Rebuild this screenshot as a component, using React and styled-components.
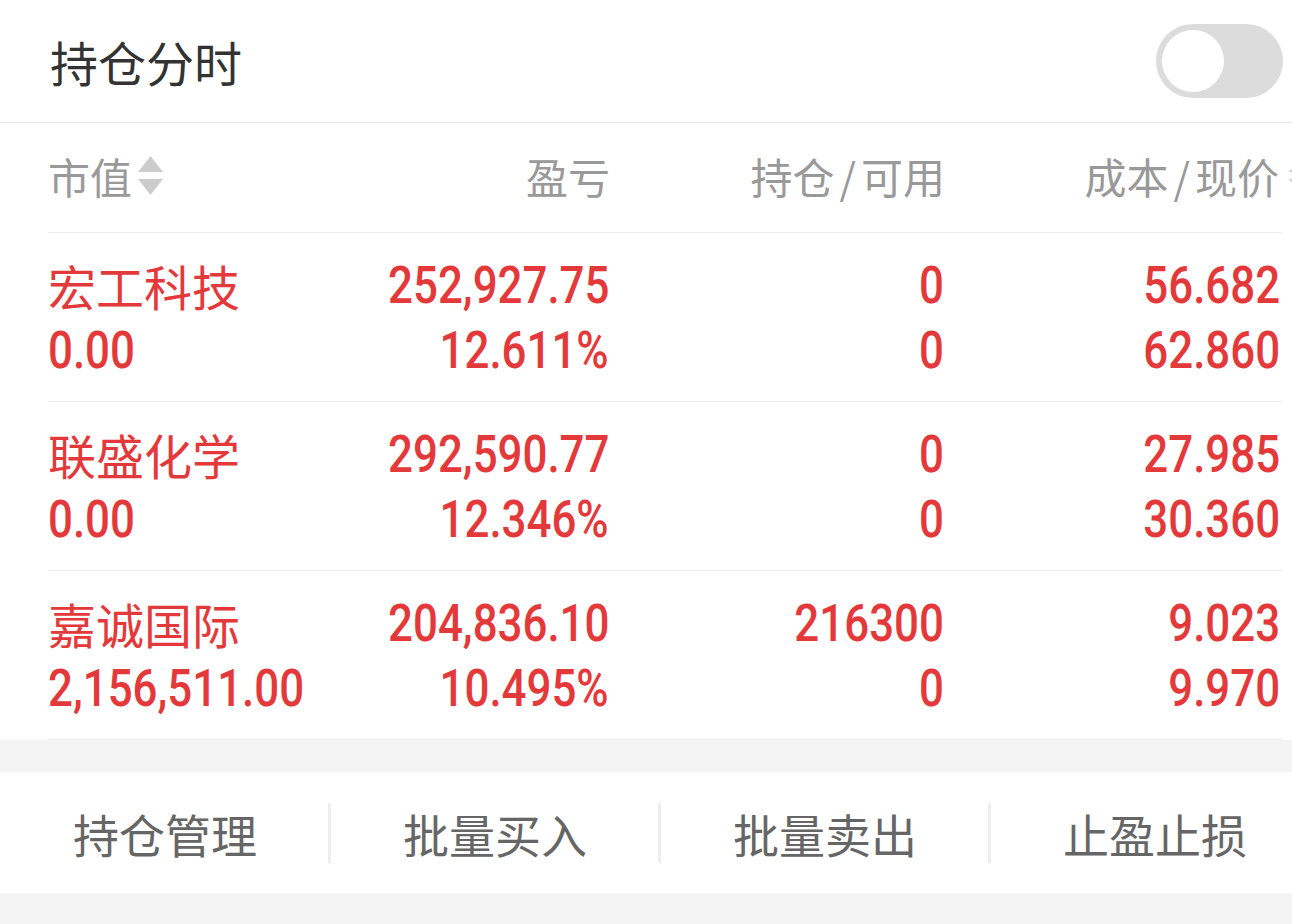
import React from "react";
import styled, { createGlobalStyle } from "styled-components";

const GlobalStyle = createGlobalStyle`
  html, body { margin: 0; padding: 0; }
  body {
    background: #f4f4f4;
    overflow: hidden;
    font-family: "Noto Sans CJK SC", "Noto Sans", sans-serif;
  }
`;

const Page = styled.div`
  width: 1292px;
  height: 924px;
  overflow: hidden;
  background: #f4f4f4;
`;

const TopBar = styled.div`
  height: 122px;
  background: #fff;
  border-bottom: 1px solid #e6e6e6;
  display: flex;
  align-items: center;
  justify-content: space-between;
  padding: 0 9px 0 50px;
`;

const Title = styled.div`
  font-size: 48px;
  color: #333;
  line-height: 1;
`;

const Toggle = styled.div`
  width: 127px;
  height: 74px;
  border-radius: 37px;
  background: #dcdcdc;
  padding: 6px;
  box-sizing: border-box;
  display: flex;
  align-items: center;
`;

const Knob = styled.div`
  width: 62px;
  height: 62px;
  border-radius: 50%;
  background: #fff;
`;

const TableWrap = styled.div`
  background: #fff;
  padding-left: 48px;
`;

const cols = "226px 335px 335px 336px";

const HeadRow = styled.div`
  width: 1234px;
  height: 110px;
  box-sizing: border-box;
  border-bottom: 1px solid #ececec;
  display: grid;
  grid-template-columns: ${cols};
  align-items: center;
`;

const HeadCell = styled.div`
  display: flex;
  align-items: center;
  justify-content: ${(p) => (p.$left ? "flex-start" : "flex-end")};
  margin-right: ${(p) => (p.$left ? 0 : -1)}px;
  font-size: 42px;
  color: #999;
  line-height: 1;
  white-space: nowrap;
  margin-top: -4px;
`;

const Slash = styled.span`
  margin: 0 5px;
`;

const SortIcon = styled.svg`
  width: 25px;
  height: 40px;
  margin-left: ${(p) => (p.$overflow ? 10 : 6)}px;
  margin-right: ${(p) => p.$overflow || 0}px;
  flex: none;
`;

const Row = styled.div`
  width: 1234px;
  height: 169px;
  box-sizing: border-box;
  border-bottom: 1px solid #ececec;
  padding-top: 20px;
  display: grid;
  grid-template-columns: ${cols};
`;

const Cell = styled.div`
  display: flex;
  flex-direction: column;
  align-items: ${(p) => (p.$left ? "flex-start" : "flex-end")};
`;

const Line = styled.div`
  height: 65px;
  line-height: 65px;
  color: #e4393b;
  white-space: nowrap;
  font-size: 48px;
  font-family: "Noto Sans CJK SC", sans-serif;
`;

const Num = styled.div`
  height: 65px;
  line-height: 65px;
  color: #e4393b;
  white-space: nowrap;
  font-size: 51px;
  font-weight: 500;
  font-family: "Roboto", "Liberation Sans", sans-serif;
  transform: scaleX(0.86);
  transform-origin: ${(p) => (p.$left ? "left" : "right")} center;
`;

const Band = styled.div`
  height: 32px;
  background: #f4f4f4;
`;

const ActionBar = styled.div`
  width: 1320px;
  height: 121px;
  background: #fff;
  display: grid;
  grid-template-columns: repeat(4, 330px);
`;

const Action = styled.div`
  position: relative;
  display: flex;
  align-items: center;
  justify-content: center;
  font-size: 46px;
  color: #666;
  line-height: 1;
  &::before {
    content: "";
    display: ${(p) => (p.$first ? "none" : "block")};
    position: absolute;
    left: -2px;
    top: 31px;
    width: 3px;
    height: 60px;
    background: #eeeeee;
  }
`;

const Sort = ({ overflow }) => (
  <SortIcon viewBox="0 0 25 40" $overflow={overflow}>
    <polygon points="12.5,0 25,16 0,16" fill="#cccccc" />
    <polygon points="0,23 25,23 12.5,39" fill="#cccccc" />
  </SortIcon>
);

const rows = [
  { name: "宏工科技", value: "0.00", pl: "252,927.75", plr: "12.611%", pos: "0", avail: "0", cost: "56.682", price: "62.860" },
  { name: "联盛化学", value: "0.00", pl: "292,590.77", plr: "12.346%", pos: "0", avail: "0", cost: "27.985", price: "30.360" },
  { name: "嘉诚国际", value: "2,156,511.00", pl: "204,836.10", plr: "10.495%", pos: "216300", avail: "0", cost: "9.023", price: "9.970" },
];

const actions = ["持仓管理", "批量买入", "批量卖出", "止盈止损"];

export default function App() {
  return (
    <Page>
      <GlobalStyle />
      <TopBar>
        <Title>持仓分时</Title>
        <Toggle>
          <Knob />
        </Toggle>
      </TopBar>
      <TableWrap>
        <HeadRow>
          <HeadCell $left>
            市值
            <Sort />
          </HeadCell>
          <HeadCell>盈亏</HeadCell>
          <HeadCell>
            持仓<Slash>/</Slash>可用
          </HeadCell>
          <HeadCell>
            成本<Slash>/</Slash>现价
            <Sort overflow={-33} />
          </HeadCell>
        </HeadRow>
        {rows.map((r) => (
          <Row key={r.name}>
            <Cell $left>
              <Line>{r.name}</Line>
              <Num $left>{r.value}</Num>
            </Cell>
            <Cell>
              <Num>{r.pl}</Num>
              <Num>{r.plr}</Num>
            </Cell>
            <Cell>
              <Num>{r.pos}</Num>
              <Num>{r.avail}</Num>
            </Cell>
            <Cell>
              <Num>{r.cost}</Num>
              <Num>{r.price}</Num>
            </Cell>
          </Row>
        ))}
      </TableWrap>
      <Band />
      <ActionBar>
        {actions.map((a, i) => (
          <Action key={a} $first={i === 0}>
            {a}
          </Action>
        ))}
      </ActionBar>
    </Page>
  );
}
